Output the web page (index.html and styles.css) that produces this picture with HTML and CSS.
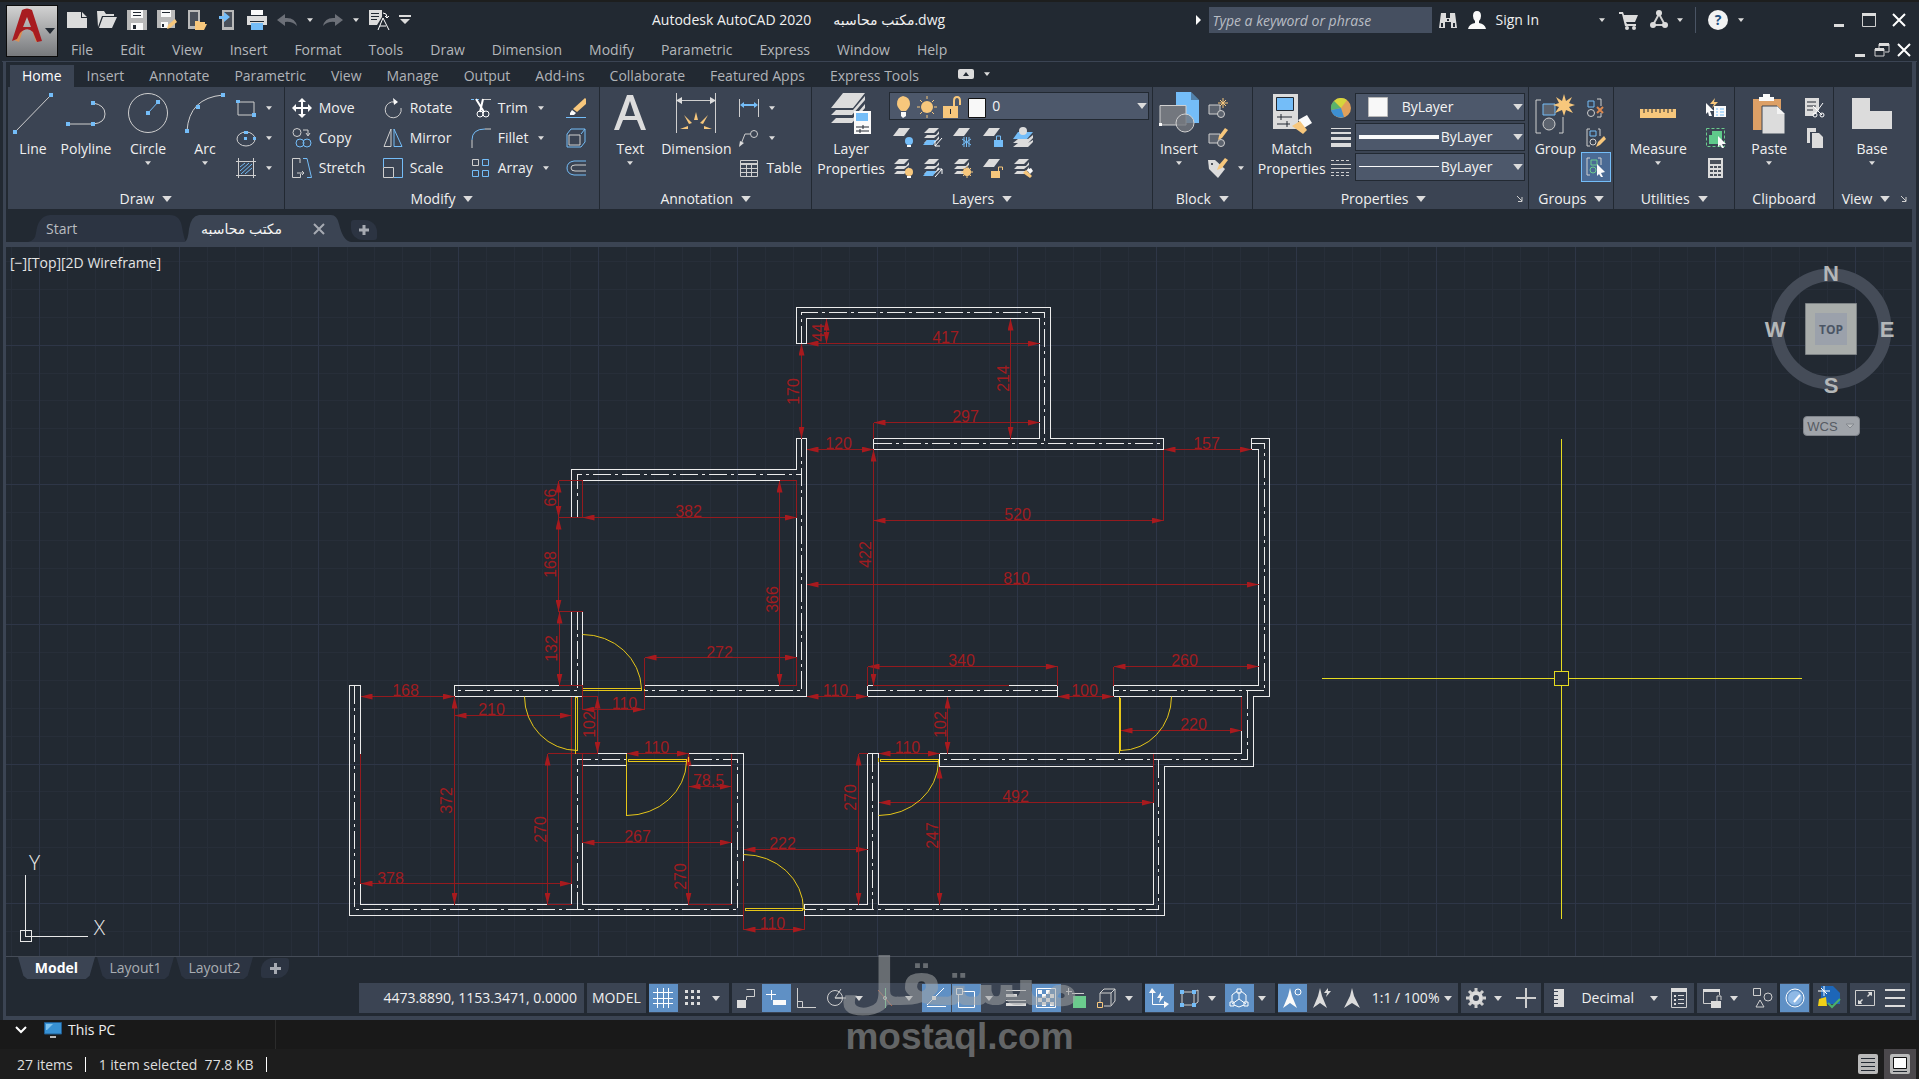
FILE: index.html
```html
<!DOCTYPE html>
<html lang="en">
<head>
<meta charset="utf-8">
<title>Autodesk AutoCAD 2020</title>
<meta name="viewport" content="width=device-width, initial-scale=1">
<link rel="stylesheet" href="styles.css">
</head>
<body>
<svg class="sprite" aria-hidden="true">
  <symbol id="caret" viewBox="0 0 8 5"><path class="fw" d="M0 0H8L4 5Z"/></symbol>
  <symbol id="sheets" viewBox="0 0 20 20"><path class="fw" d="M6 1H16L11 6H1ZM4 8H13L16 4V7L11 11H1ZM4 13H13L16 9V12L11 16H1Z"/></symbol>
  <symbol id="sheet" viewBox="0 0 20 20"><path class="fw" d="M6 1H17L11 9H0Z"/></symbol>
  <symbol id="launch" viewBox="0 0 8 8"><path class="sw" d="M1 1L6 6M6 2V6.500H2"/></symbol>
</svg>

<div class="app">
  <header class="header">
    <button class="app-button" aria-label="Application menu">
      <svg width="50" height="50" viewBox="0 0 50 50"><defs><linearGradient id="metal" x2="0" y2="1"><stop stop-color="#d2d2d2"/><stop offset="1" stop-color="#77797c"/></linearGradient></defs><rect width="50" height="50" fill="url(#metal)"/><path fill="#d98f55" d="M7 34L9 24H16L12 36ZM25 24H31L34 34L29 36Z"/><path fill="#a81c20" d="M5 35L15 4Q20 1 25 4L35 35L30 36L26 26Q20 20 13 27L10 33ZM16 21H24L20 11Z"/><path class="fk" d="M38 22H48L43 28Z"/></svg>
    </button>
    <div class="header-rows">
      <div class="titlebar">
        <div class="quick">
          <button aria-label="New"><svg width="20" height="20" viewBox="0 0 20 20"><path class="fw" d="M0 2H14V8H20V18H0ZM15 2L20 7H15Z"/></svg></button>
          <button aria-label="Open"><svg width="20" height="20" viewBox="0 0 20 20"><path class="fw" d="M0 1H7L9 4H17V6H5L1 17ZM6 7H20L15 18H2Z"/></svg></button>
          <button aria-label="Save"><svg width="20" height="20" viewBox="0 0 20 20"><path class="fg" d="M0 0H20V20H0Z"/><path class="fww" d="M4 0H16V8H4ZM4 13H16V20H4Z"/><path class="fk" d="M6 2H14V3H6ZM6 5H14V6H6ZM6 15H9V19H6Z"/></svg></button>
          <button aria-label="Save as"><svg width="20" height="20" viewBox="0 0 20 20"><path class="fg" d="M0 0H18V18H0Z"/><path class="fww" d="M4 0H14V7H4ZM4 12H11V18H4Z"/><path class="fk" d="M5 2H13V3H5ZM5 14H7V17H5Z"/><path class="fo" d="M10 19L11 15L18 9L20 12L13 18Z"/></svg></button>
          <button aria-label="Open from web"><svg width="20" height="20" viewBox="0 0 20 20"><path class="fg" d="M1 0H13V19H1Z"/><path class="fs" d="M3 2H11V16H3Z"/><path class="fo" d="M8 11H12L13 12H18V14H20L17 20H8Z"/></svg></button>
          <button aria-label="Save to web"><svg width="20" height="20" viewBox="0 0 20 20"><path class="fg" d="M5 0H17V20H5Z"/><path class="fs" d="M7 2H15V17H7Z"/><path class="fb" d="M2 6H7V2L13 7L7 12V9H2Z"/></svg></button>
          <button aria-label="Plot"><svg width="20" height="20" viewBox="0 0 20 20"><path class="fww" d="M4 0H16V5H4Z"/><path class="fw" d="M0 6H20V15H0Z"/><path class="fk" d="M3 11H17V12H3Z"/><path class="fb" d="M4 13H16V20H4Z"/></svg></button>
          <button aria-label="Undo"><svg width="20" height="20" viewBox="0 0 20 20"><path fill="#6c7078" d="M0 10L8 4V8Q18 7 20 16Q15 11 8 12V16Z"/></svg></button>
          <svg class="caret" width="6" height="4"><use href="#caret"/></svg>
          <button aria-label="Redo"><svg width="20" height="20" viewBox="0 0 20 20"><path fill="#6c7078" d="M20 10L12 4V8Q2 7 0 16Q5 11 12 12V16Z"/></svg></button>
          <svg class="caret" width="6" height="4"><use href="#caret"/></svg>
          <button aria-label="Workspace text"><svg width="20" height="20" viewBox="0 0 20 20"><path class="fw" d="M0 0H13V7L8 15H0Z"/><path class="fk" d="M2 3H10V4H2ZM2 6H10V7H2ZM2 9H8V10H2Z"/><path class="sww" d="M9 20L14 8L20 20M11 16H17M14 3Q18 3 18 7M16 6L18 8L20 6"/></svg></button>
          <button aria-label="Customize toolbar"><svg width="12" height="10" viewBox="0 0 12 10"><path class="fw" d="M0 0H12V2H0ZM1 4H11L6 9Z"/></svg></button>
        </div>
        <h1 class="title"><span>Autodesk AutoCAD 2020</span><span>مكتب محاسبه.dwg</span></h1>
        <div class="account">
          <svg class="search-arrow" width="5" height="10" viewBox="0 0 5 10"><path class="fww" d="M0 0L5 5L0 10Z"/></svg>
          <input class="search" type="search" placeholder="Type a keyword or phrase" aria-label="Search">
          <button aria-label="Find"><svg width="20" height="20" viewBox="0 0 20 20"><path class="fw" d="M3 3H8V8H12V3H17L19 18H13V12H7V18H1Z"/><path class="fk" d="M9 9H11V11H9ZM3 13H5V17H3ZM15 13H17V17H15Z"/></svg></button>
          <button class="signin"><svg width="20" height="20" viewBox="0 0 20 20"><path class="fww" d="M10 1Q14 1 14 6Q14 9 12 11V13Q18 14 19 19H1Q2 14 8 13V11Q6 9 6 6Q6 1 10 1Z"/></svg>Sign In</button>
          <svg class="caret" width="6" height="4"><use href="#caret"/></svg>
          <button class="cart" aria-label="App store"><svg width="20" height="20" viewBox="0 0 20 20"><path class="fw" d="M0 2H4L5 5H19L16 12H7L8 14H17V16H6L3 4H0Z"/><circle class="fw" cx="8" cy="18" r="2"/><circle class="fw" cx="15" cy="18" r="2"/></svg></button>
          <button class="hub" aria-label="Stay connected"><svg width="20" height="20" viewBox="0 0 20 20"><path class="sw thick" d="M10 4L4 15H16Z"/><circle class="fw" cx="10" cy="3" r="3"/><circle class="fw" cx="4" cy="15" r="3"/><circle class="fw" cx="16" cy="15" r="3"/></svg></button>
          <svg class="caret" width="6" height="4"><use href="#caret"/></svg>
          <span class="rule"></span>
          <button class="help" aria-label="Help"><span>?</span></button>
          <svg class="caret" width="6" height="4"><use href="#caret"/></svg>
        </div>
        <div class="window-buttons">
          <button aria-label="Minimize"><svg width="14" height="14" viewBox="0 0 14 14"><path class="fw" d="M2 11H12V14H2Z"/></svg></button>
          <button aria-label="Maximize"><svg width="16" height="16" viewBox="0 0 16 16"><path class="sw" d="M1.500 1.500H14.500V14.500H1.500Z"/><path class="fw" d="M1 1H15V4H1Z"/></svg></button>
          <button aria-label="Close"><svg width="14" height="14" viewBox="0 0 14 14"><path class="sww thick" d="M1 1L13 13M13 1L1 13"/></svg></button>
        </div>
      </div>
      <div class="menurow">
        <nav class="menubar" aria-label="Menu bar">
          <a href="#">File</a><a href="#">Edit</a><a href="#">View</a><a href="#">Insert</a><a href="#">Format</a><a href="#">Tools</a><a href="#">Draw</a><a href="#">Dimension</a><a href="#">Modify</a><a href="#">Parametric</a><a href="#">Express</a><a href="#">Window</a><a href="#">Help</a>
        </nav>
        <div class="doc-buttons">
          <button aria-label="Minimize drawing"><svg width="14" height="14" viewBox="0 0 14 14"><path class="fw" d="M2 11H12V14H2Z"/></svg></button>
          <button aria-label="Restore drawing"><svg width="16" height="14" viewBox="0 0 16 14"><path class="sw" d="M1 6H10V13H1ZM5 5V1H15V9H11"/><path class="fw" d="M1 5H10V8H1ZM5 0H15V3H5Z"/></svg></button>
          <button aria-label="Close drawing"><svg width="14" height="14" viewBox="0 0 14 14"><path class="sww thick" d="M1 1L13 13M13 1L1 13"/></svg></button>
        </div>
      </div>
    </div>
  </header>

  <div class="frame">
    <nav class="ribbon-tabs" aria-label="Ribbon tabs">
      <a class="active" href="#">Home</a><a href="#">Insert</a><a href="#">Annotate</a><a href="#">Parametric</a><a href="#">View</a><a href="#">Manage</a><a href="#">Output</a><a href="#">Add-ins</a><a href="#">Collaborate</a><a href="#">Featured Apps</a><a href="#">Express Tools</a>
      <button class="collapse" aria-label="Minimize ribbon"><svg width="16" height="10" viewBox="0 0 16 10"><rect class="fw" width="16" height="10" rx="2"/><path class="fk" d="M5 7H11L8 3Z"/></svg></button>
      <svg class="caret" width="6" height="4"><use href="#caret"/></svg>
    </nav>

    <div class="ribbon">
      <section class="panel p-draw">
        <div class="tools">
          <button class="big line"><svg width="40" height="42" viewBox="0 0 40 42"><path class="sw" d="M2 40L38 3"/><path class="fb" d="M0 38H4V42H0ZM36 1H40V5H36Z"/></svg>Line</button>
          <button class="big polyline"><svg width="40" height="42" viewBox="0 0 40 42"><path class="sw" d="M2 32H27Q39 31 39 22T27 11"/><path class="fb" d="M0 30H4V34H0ZM25 30H29V34H25ZM25 9H29V13H25Z"/></svg>Polyline</button>
          <button class="big circle"><svg width="40" height="42" viewBox="0 0 40 42"><circle class="sw" cx="20" cy="21" r="19.500"/><path class="sb" d="M20 21L31 9"/><path class="fb" d="M18 19H22V23H18ZM28 8H32V12H28Z"/></svg>Circle<svg class="caret" width="6" height="4"><use href="#caret"/></svg></button>
          <button class="big arc"><svg width="40" height="42" viewBox="0 0 40 42"><path class="sw" d="M2 39Q4 6 38 3"/><path class="fb" d="M0 37H4V41H0ZM11 13H15V17H11ZM36 1H40V5H36Z"/></svg>Arc<svg class="caret" width="6" height="4"><use href="#caret"/></svg></button>
          <div class="col">
            <button class="small"><svg width="20" height="20" viewBox="0 0 20 20"><path class="sw" d="M2 4H18V17H2Z"/><path class="fb" d="M0 2H4V5H0ZM16 15H20V19H16Z"/></svg><svg class="caret" width="6" height="4"><use href="#caret"/></svg></button>
            <button class="small"><svg width="20" height="20" viewBox="0 0 20 20"><ellipse class="sw" cx="10" cy="11" rx="9" ry="7"/><path class="fb" d="M8 3H12V6H8ZM8 9H11V12H8ZM17 9H20V12H17Z"/></svg><svg class="caret" width="6" height="4"><use href="#caret"/></svg></button>
            <button class="small"><svg width="20" height="20" viewBox="0 0 20 20"><path class="sw" d="M0 3.500H20M0 17.500H20M2.500 0V20M17.500 0V20"/><path class="sb" d="M4 9L9 5M4 13L13 5M5 16L16 6M9 16L16 10"/></svg><svg class="caret" width="6" height="4"><use href="#caret"/></svg></button>
          </div>
        </div>
        <h2>Draw<svg class="caret" width="10" height="6"><use href="#caret"/></svg></h2>
      </section>

      <section class="panel p-modify">
        <div class="tools">
          <div class="col c1">
            <button class="small"><svg width="20" height="20" viewBox="0 0 20 20"><path class="sww thick" d="M10 2V18M2 10H18"/><path class="fww" d="M6 4H14L10 0ZM6 16H14L10 20ZM4 6V14L0 10ZM16 6V14L20 10Z"/></svg>Move</button>
            <button class="small"><svg width="20" height="20" viewBox="0 0 20 20"><circle class="sw" cx="5" cy="4.500" r="4"/><circle class="sb" cx="8" cy="15" r="4"/><circle class="sb" cx="15" cy="15" r="4"/><path class="sw" d="M11 2H16V7M14 5L16 8L18 5"/></svg>Copy</button>
            <button class="small"><svg width="20" height="20" viewBox="0 0 20 20"><path class="sw" d="M8 5V.5H.5V19.500H8.500V16M5 15H12M10 13L12 15L10 17"/><path class="sb" d="M11 .5H15L19.500 19.500H15"/></svg>Stretch</button>
          </div>
          <div class="col c2">
            <button class="small"><svg width="20" height="20" viewBox="0 0 20 20"><path class="sw" d="M12 4A8 8 0 1 0 18 10"/><path class="fww" d="M10 0L15 4L11 7Z"/></svg>Rotate</button>
            <button class="small"><svg width="20" height="20" viewBox="0 0 20 20"><path class="sw" d="M8 1V18.500H1Z"/><path class="sb" d="M11 1V18.500H19Z"/></svg>Mirror</button>
            <button class="small"><svg width="20" height="20" viewBox="0 0 20 20"><path class="sb" d="M.5 9V.5H19.500V19.500H11"/><path class="sw" d="M.5 9.500H10.500V19.500H.5Z"/></svg>Scale</button>
          </div>
          <div class="col c3">
            <button class="small"><svg width="20" height="20" viewBox="0 0 20 20"><path class="sb dash" d="M0 1.500H8"/><path class="sw" d="M12 1.500H20"/><path class="sww thick" d="M5 1L13 14M12 1L9 14"/><circle class="sww" cx="9" cy="16" r="3"/><circle class="sww" cx="15" cy="16" r="3"/></svg>Trim<svg class="caret" width="6" height="4"><use href="#caret"/></svg></button>
            <button class="small"><svg width="20" height="20" viewBox="0 0 20 20"><path class="sb" d="M1 12Q1 1 14 1"/><path class="sw" d="M14 1H20M1 12V20"/></svg>Fillet<svg class="caret" width="6" height="4"><use href="#caret"/></svg></button>
            <button class="small"><svg width="20" height="20" viewBox="0 0 20 20"><path class="sw" d="M1.500 1.500H7.500V7.500H1.500Z"/><path class="sb" d="M11.500 1.500H17.500V7.500H11.500ZM1.500 12.500H7.500V18.500H1.500ZM11.500 12.500H17.500V18.500H11.500Z"/></svg>Array<svg class="caret" width="6" height="4"><use href="#caret"/></svg></button>
          </div>
          <div class="col c4">
            <button class="small" aria-label="Erase"><svg width="20" height="20" viewBox="0 0 20 20"><path class="fo" d="M19 0L20 1V6L11 14L7 11Z"/><path class="fww" d="M6 12L10 15L8 17H4V15Z"/><path class="sb" d="M0 19.500H20"/></svg></button>
            <button class="small" aria-label="Explode"><svg width="20" height="20" viewBox="0 0 20 20"><path class="sb" d="M1 6L5 1H19V14L15 19M1 6V19M15 6L19 1M15 19H1"/><path class="sw" d="M3 7H14V17H3Z"/></svg></button>
            <button class="small" aria-label="Offset"><svg width="20" height="20" viewBox="0 0 20 20"><path class="sb" d="M20 3H8Q1 4 1 10T8 17H20"/><path class="sw" d="M20 7H9Q5 7 5 10T9 13H20"/></svg></button>
          </div>
        </div>
        <h2>Modify<svg class="caret" width="10" height="6"><use href="#caret"/></svg></h2>
      </section>

      <section class="panel p-annotation">
        <div class="tools">
          <button class="big text"><svg width="40" height="42" viewBox="0 0 40 42"><path class="fw" d="M4 38L17 3H23L36 38H31L27 28H13L9 38ZM15 24H25L20 9Z"/></svg>Text<svg class="caret" width="6" height="4"><use href="#caret"/></svg></button>
          <button class="big dimension"><svg width="40" height="42" viewBox="0 0 40 42"><path class="sw" d="M.5 1V41M39.500 1V41M2 8.500H38"/><path class="fw" d="M0 8.500L6 5V12ZM40 8.500L34 5V12Z"/><path class="fo" d="M18 28L20 20L22 28ZM8 23L16 31L13 32ZM32 23L24 31L27 32ZM4 37L12 34V37ZM36 37L28 34V37Z"/></svg>Dimension</button>
          <div class="col">
            <button class="small"><svg width="20" height="20" viewBox="0 0 20 20"><path class="sw" d="M.5 1V19M19.500 1V19"/><path class="sb thick" d="M3 7H17"/><path class="fb" d="M1 7L5 4V10ZM19 7L15 4V10Z"/></svg><svg class="caret" width="6" height="4"><use href="#caret"/></svg></button>
            <button class="small"><svg width="20" height="20" viewBox="0 0 20 20"><circle class="sw" cx="15" cy="6" r="3.500"/><path class="sw" d="M2 16L6 6H11"/><path class="fw" d="M0 19L1 13L5 15Z"/></svg><svg class="caret" width="6" height="4"><use href="#caret"/></svg></button>
            <button class="small"><svg width="20" height="20" viewBox="0 0 20 20"><path class="sw" d="M1.500 2.500H18.500V18.500H1.500ZM1.500 10.500H18.500M1.500 14.500H18.500M7.500 6V18M12.500 6V18"/><path class="sw thick" d="M1 6H19"/></svg>Table</button>
          </div>
        </div>
        <h2>Annotation<svg class="caret" width="10" height="6"><use href="#caret"/></svg></h2>
      </section>

      <section class="panel p-layers">
        <div class="tools">
          <button class="big wider"><svg width="40" height="42" viewBox="0 0 40 42"><path class="fw" d="M12 1H34L22 16H0ZM5 18H22L34 4V8L21 23H0ZM5 26H22L34 12V16L21 31H0Z"/><path class="fww" d="M23 19H40V42H23Z"/><path class="fb" d="M25 21H37V29H25Z"/><path class="skt" d="M25 35H38M25 39H38M32 33V37M29 37V41"/></svg>Layer<span>Properties</span></button>
          <div class="layer-area">
            <div class="combo layer-combo">
              <select aria-label="Layer"><option>0</option></select>
              <svg class="combo-art" width="96" height="22" viewBox="0 0 96 22"><path class="fo" d="M10 0Q17 1 17 8Q17 11 13 15H8Q4 11 4 8Q4 1 10 0Z"/><path class="fww" d="M8 16H13V20L10 22L8 20Z"/><circle class="fo" cx="34" cy="11" r="6"/><path class="so" d="M34 0V3M34 19V22M24 11H27M41 11H44M27 4L29 6M39 16L41 18M41 4L39 6M29 16L27 18"/><path class="fo" d="M50 10H65V22H50Z"/><path class="so thick" d="M61 10V5Q61 1 64 1T67 5V9"/><path fill="#f8f8f8" stroke="#111" d="M75.500 2.500H92.500V21.500H75.500Z"/><path class="fk" d="M57 13H58V18H57Z"/></svg>
              <svg class="combo-arrow" width="10" height="6"><use href="#caret"/></svg>
            </div>
            <div class="icon-grid">
              <button aria-label="Off"><svg width="20" height="20"><use href="#sheet"/><circle class="fb" cx="16" cy="14" r="4"/><path class="fww" d="M14 18H18V20H14Z"/></svg></button>
              <button aria-label="Isolate"><svg width="20" height="20"><use href="#sheets"/><path class="fb" d="M4 13H13L10 18H0Z"/><path class="sww" d="M19 11L12 19M12 14V19H17"/></svg></button>
              <button aria-label="Freeze"><svg width="20" height="20"><use href="#sheet"/><path class="sb" d="M13.500 10V20M9 12L18 18M18 12L9 18M11 10V20M16 10V20"/></svg></button>
              <button aria-label="Lock"><svg width="20" height="20"><use href="#sheet"/><path class="fb" d="M11 13H20V20H11Z"/><path class="sb" d="M13.500 13V9H17.500V13"/></svg></button>
              <button aria-label="Make current"><svg width="20" height="20"><path class="fw" d="M5 12H15L20 8V11L15 16H0ZM5 16H15L20 13V15L15 20H0Z"/><path class="fb" d="M5 5H20L14 12H0Z"/><circle class="fw" cx="10" cy="4" r="4"/></svg></button>
              <button aria-label="Turn all on"><svg width="20" height="20"><use href="#sheets"/><circle class="fo" cx="16" cy="14" r="4"/><path class="fww" d="M14 18H18V20H14Z"/></svg></button>
              <button aria-label="Unisolate"><svg width="20" height="20"><use href="#sheets"/><path class="fb" d="M4 13H13L10 18H0Z"/><path class="sww" d="M12 19L19 11M14 11H19V16"/></svg></button>
              <button aria-label="Thaw all"><svg width="20" height="20"><use href="#sheets"/><circle class="fo" cx="14" cy="14" r="4"/><path class="so" d="M14 8V20M8 14H20M10 10L18 18M18 10L10 18"/></svg></button>
              <button aria-label="Unlock"><svg width="20" height="20"><use href="#sheet"/><path class="fo" d="M8 13H17V20H8Z"/><path class="so" d="M15.500 13V9H19.500V12"/></svg></button>
              <button aria-label="Match layer"><svg width="20" height="20"><use href="#sheets"/><path class="fo" d="M10 15L13 12L19 18L17 20Z"/><path class="fww" d="M14 12L18 10L20 13L17 16Z"/></svg></button>
            </div>
          </div>
        </div>
        <h2>Layers<svg class="caret" width="10" height="6"><use href="#caret"/></svg></h2>
      </section>

      <section class="panel p-block">
        <div class="tools">
          <button class="big"><svg width="40" height="42" viewBox="0 0 40 42"><path class="fb" d="M17 0H32L40 8V31H17Z"/><path class="fk" fill-opacity=".4" d="M32 0L40 8H32Z"/><path fill="#73777e" stroke="#d0d0d0" d="M1 13.500H27V33H1Z"/><circle fill="#73777e" fill-opacity=".8" stroke="#d0d0d0" cx="26" cy="31" r="9"/><path class="fww" d="M0 31H3V34H0Z"/></svg>Insert<svg class="caret" width="6" height="4"><use href="#caret"/></svg></button>
          <div class="col">
            <button class="small" aria-label="Create block"><svg width="20" height="20"><path class="sw fm" d="M1 7H12V16H1Z"/><circle class="sw fm" cx="13" cy="16" r="3.500"/><path class="so" d="M15 0V10M10 5H20M12 2L18 8M18 2L12 8"/></svg></button>
            <button class="small" aria-label="Edit block"><svg width="20" height="20"><path class="sw fm" d="M1 6H12V15H1Z"/><circle class="sw fm" cx="13" cy="15" r="3.500"/><path class="fo" d="M10 12L11 8L17 0L20 2L14 10Z"/></svg></button>
            <button class="small"><svg width="20" height="20"><path class="fw" d="M0 2H7L17 11L10 20L1 11Z"/><path class="fo" d="M9 12L11 7L17 0L20 2L14 10Z"/><circle class="fk" cx="4" cy="6" r="1"/></svg><svg class="caret" width="6" height="4"><use href="#caret"/></svg></button>
          </div>
        </div>
        <h2>Block<svg class="caret" width="10" height="6"><use href="#caret"/></svg></h2>
      </section>

      <section class="panel p-properties">
        <div class="tools">
          <button class="big wider"><svg width="40" height="42" viewBox="0 0 40 42"><path class="fw" d="M1 2H26V37H1Z"/><path class="fb" stroke="#222932" d="M4.500 5.500H21.500V18.500H4.500Z"/><path class="skt" d="M5 25H20M9 22V28M5 32H18M15 29V35"/><path class="fww" d="M26 28L35 23L40 31L32 36Z"/><path class="fo" d="M20 34L28 29L35 38L31 42Z"/></svg>Match<span>Properties</span></button>
          <div class="col">
            <button class="small" aria-label="Color"><svg width="20" height="20"><circle fill="#e0a05a" cx="10" cy="10" r="10"/><path fill="#d6d63c" d="M10 10L3 3A10 10 0 0 1 16 2Z"/><path fill="#59b36b" d="M10 10L0 12A10 10 0 0 1 3 3Z"/><path fill="#3d8fd1" d="M10 10L0 12A10 10 0 0 0 13 19Z"/></svg></button>
            <button class="small" aria-label="Lineweight"><svg width="20" height="20"><path class="fw" d="M0 0H20V1H0ZM0 4H20V6H0ZM0 9H20V12H0ZM0 15H20V19H0Z"/></svg></button>
            <button class="small" aria-label="Linetype"><svg width="20" height="20"><path class="sw" d="M0 6.500H20M0 10.500H20"/><path class="sw dash" d="M0 2.500H20M0 14.500H20M0 17.500H20"/></svg></button>
          </div>
          <div class="combos">
            <div class="combo"><select class="c-color" aria-label="Object color"><option>ByLayer</option></select><svg class="combo-art" width="30" height="20"><path fill="#f8f8f8" stroke="#b8b8b8" d="M9.500 .5H28.500V19.500H9.500Z"/></svg><svg class="combo-arrow" width="10" height="6"><use href="#caret"/></svg></div>
            <div class="combo"><select class="c-line" aria-label="Object lineweight"><option>ByLayer</option></select><svg class="combo-art" width="80" height="20"><path class="fww" d="M0 8H80V12H0Z"/></svg><svg class="combo-arrow" width="10" height="6"><use href="#caret"/></svg></div>
            <div class="combo"><select class="c-line" aria-label="Object linetype"><option>ByLayer</option></select><svg class="combo-art" width="80" height="20"><path class="fww" d="M0 9H80V10H0Z"/></svg><svg class="combo-arrow" width="10" height="6"><use href="#caret"/></svg></div>
          </div>
        </div>
        <h2>Properties<svg class="caret" width="10" height="6"><use href="#caret"/></svg><svg class="launch" width="8" height="8"><use href="#launch"/></svg></h2>
      </section>

      <section class="panel p-groups">
        <div class="tools">
          <button class="big"><svg width="40" height="42" viewBox="0 0 40 42"><path class="sw" d="M6 8H1V41H6M24 41H28V25"/><path class="sb fm" d="M8 12H20V23H8Z"/><circle class="sw fm" cx="14" cy="32" r="6"/><path class="fo" d="M29 2L31 9L37 5L34 11L40 13L34 15L38 21L31 18L29 24L27 18L20 21L24 15L18 13L24 11L21 5L27 9Z"/></svg>Group</button>
          <div class="col">
            <button class="small" aria-label="Ungroup"><svg width="20" height="20"><path class="sb" d="M2 3H8V9H2Z"/><circle class="sw" cx="5" cy="15" r="3.500"/><path class="sw" d="M11 1H15V8M15 15V19H11"/><path stroke="#d98850" stroke-width="2" d="M11 9L17 15M17 9L11 15"/></svg></button>
            <button class="small" aria-label="Edit group"><svg width="20" height="20"><path class="sw" d="M4 1H1V18H4M12 1H14V8"/><path class="sb" d="M4 3H10V8H4Z"/><circle class="sw" cx="7" cy="14" r="3"/><path class="fo" d="M10 19L12 14L18 8L20 11L14 17Z"/></svg></button>
            <button class="small on" aria-label="Group selection" aria-pressed="true"><svg width="20" height="20"><path class="sw" d="M4 1H1V18H4M12 1H15V8"/><path class="sgr" d="M5 3H11V8H5Z"/><circle class="sgr" cx="7" cy="13" r="3"/><path class="fww" d="M11 7L19 15L15 16L17 20L15 20L13 17L11 19Z"/></svg></button>
          </div>
        </div>
        <h2>Groups<svg class="caret" width="10" height="6"><use href="#caret"/></svg></h2>
      </section>

      <section class="panel p-utilities">
        <div class="tools">
          <button class="big wider"><svg width="40" height="42" viewBox="0 0 40 42"><path class="fo" d="M2 17H38V26H2Z"/><path class="skt" d="M6 17V21M10 17V20M14 17V21M18 17V20M22 17V21M26 17V20M30 17V21M34 17V20"/></svg>Measure<svg class="caret" width="6" height="4"><use href="#caret"/></svg></button>
          <div class="col">
            <button class="small" aria-label="Quick select"><svg width="20" height="20"><path class="fww" d="M8 8H20V19H8ZM0 5L8 13H4L6 18H3L2 14L0 16Z"/><path class="fo" d="M9 0L4 6H8L6 10L12 4H8Z"/><path class="sb" d="M10 11H12M14 11H18M10 14H12M14 14H18M10 17H12M14 17H18"/></svg></button>
            <button class="small" aria-label="Select all"><svg width="20" height="20"><path fill="#5fc98b" d="M6 3H16V13H13V16H3V7H6Z"/><path class="sgr dash" d="M.5 .5H18.500V18.500H.5Z"/><path class="fww" d="M12 8L20 16L16 16L18 20H16L14 17L12 19Z"/></svg></button>
            <button class="small" aria-label="Calculator"><svg width="20" height="20"><path class="fw" d="M2 0H17V20H2Z"/><path class="fs" d="M4 2H15V6H4ZM4 8H7V10H4ZM8 8H11V10H8ZM12 8H15V10H12ZM4 12H7V14H4ZM8 12H11V14H8ZM12 12H15V14H12ZM4 16H7V18H4ZM8 16H11V18H8ZM12 16H15V18H12Z"/></svg></button>
          </div>
        </div>
        <h2>Utilities<svg class="caret" width="10" height="6"><use href="#caret"/></svg></h2>
      </section>

      <section class="panel p-clipboard">
        <div class="tools">
          <button class="big"><svg width="40" height="42" viewBox="0 0 40 42"><path fill="#dda066" d="M4 7H32V38H4Z"/><path class="fww" d="M10 5H14V2H21V5H25V9H10Z"/><path class="fw" stroke="#3b4453" d="M13 14H28L36 22V42H13Z"/><path fill="#f4f4f4" d="M28 14L36 22H28Z"/></svg>Paste<svg class="caret" width="6" height="4"><use href="#caret"/></svg></button>
          <div class="col">
            <button class="small" aria-label="Cut"><svg width="20" height="20"><path class="fw" d="M0 0H14V12L8 18H0Z"/><path class="skt" d="M2 4H11M2 8H11M2 12H8"/><path class="sww" d="M18 5L10 16M8 8L17 17"/><circle class="sww" cx="10" cy="17" r="2"/><circle class="sww" cx="17" cy="17" r="2"/></svg></button>
            <button class="small" aria-label="Copy clip"><svg width="20" height="20"><path class="fw" d="M2 0H11V4H5V15H2ZM7 5H14L18 9V20H7Z"/></svg></button>
          </div>
        </div>
        <h2>Clipboard</h2>
      </section>

      <section class="panel p-view">
        <div class="tools">
          <button class="big wider"><svg width="40" height="42" viewBox="0 0 40 42"><path class="fw" d="M0 6H18V19H40V37H0Z"/></svg>Base<svg class="caret" width="6" height="4"><use href="#caret"/></svg></button>
        </div>
        <h2>View<svg class="caret" width="10" height="6"><use href="#caret"/></svg><svg class="launch" width="8" height="8"><use href="#launch"/></svg></h2>
      </section>
    </div>

    <nav class="file-tabs" aria-label="Drawings">
      <a class="file-tab start" href="#"><svg viewBox="0 0 158 27" preserveAspectRatio="none"><path fill="#2c3442" d="M0 27Q7 26 8 18Q10 1 22 0H142Q152 0 154 12T158 27Z"/></svg><span>Start</span></a>
      <div class="file-tab current"><svg viewBox="0 0 166 27" preserveAspectRatio="none"><path fill="#3b4453" d="M0 27Q3 25 4 14Q6 1 14 0H146Q152 0 154 9Q158 26 166 27Z"/></svg><a href="#">مكتب محاسبه</a><button aria-label="Close drawing tab"><svg width="12" height="12" viewBox="0 0 12 12"><path stroke="#a6aab2" stroke-width="2" d="M1 1L11 11M11 1L1 11"/></svg></button></div>
      <button class="add-file" aria-label="New tab"><svg width="12" height="12" viewBox="0 0 12 12"><path stroke="#a6aab2" stroke-width="3" d="M6 1V11M1 6H11"/></svg></button>
    </nav>

    <main class="canvas">
      <svg class="drawing" role="img" aria-label="Floor plan">
        <defs>
          <marker id="arrow" markerUnits="userSpaceOnUse" markerWidth="12" markerHeight="6" refX="12" refY="3" orient="auto-start-reverse"><path fill="#a81a1e" d="M0 0V6L12 3Z"/></marker>
        </defs>
        <g class="world">
          <path class="grid-minor" d="M11 0V2000M67 0V2000M95 0V2000M123 0V2000M151 0V2000M207 0V2000M235 0V2000M263 0V2000M291 0V2000M347 0V2000M374 0V2000M402 0V2000M430 0V2000M486 0V2000M514 0V2000M542 0V2000M570 0V2000M626 0V2000M654 0V2000M682 0V2000M710 0V2000M765 0V2000M793 0V2000M821 0V2000M849 0V2000M905 0V2000M933 0V2000M961 0V2000M989 0V2000M1045 0V2000M1073 0V2000M1100 0V2000M1128 0V2000M1184 0V2000M1212 0V2000M1240 0V2000M1268 0V2000M1324 0V2000M1352 0V2000M1380 0V2000M1408 0V2000M1464 0V2000M1492 0V2000M1520 0V2000M1548 0V2000M1603 0V2000M1631 0V2000M1659 0V2000M1687 0V2000M1743 0V2000M1771 0V2000M1799 0V2000M1827 0V2000M1883 0V2000M1911 0V2000M0 261H3000M0 289H3000M0 317H3000M0 373H3000M0 400H3000M0 428H3000M0 456H3000M0 512H3000M0 540H3000M0 568H3000M0 596H3000M0 652H3000M0 680H3000M0 708H3000M0 736H3000M0 791H3000M0 819H3000M0 847H3000M0 875H3000M0 931H3000"/>
          <path class="grid-major" d="M39 0V2000M179 0V2000M318 0V2000M458 0V2000M598 0V2000M737 0V2000M877 0V2000M1017 0V2000M1156 0V2000M1296 0V2000M1436 0V2000M1575 0V2000M1715 0V2000M1855 0V2000M0 345H3000M0 484H3000M0 624H3000M0 764H3000M0 903H3000"/>

          <g class="walls">
            <path d="M806 343H796V307H1050V438H1163V449H873V438H1039V318H806V343"/>
            <path d="M1251 449V438H1269V696H1253V766H1164V915H804V904H867V753H878V904H1153V766H939V753H1241V696H1113V685H1258V449H1251"/>
            <path d="M867 685H1057V696H867Z"/>
            <path d="M571 517V469H796V438H806V696H644V685H796V480H582V517"/>
            <path d="M571 611V685H454V696H582V611"/>
            <path d="M360 904V685H349V915H743V753H688V765H731V904H582V765H626V753H571V904H360"/>
          </g>
          <g class="centres">
            <path d="M801 343V312H1044V443"/><path d="M873 443H1163"/><path d="M1251 443H1264V690H1113"/><path d="M1247 690V759H939"/><path d="M1158 759V909H804"/><path d="M872 753V909"/><path d="M867 690H1057"/><path d="M577 517V474H801"/><path d="M801 438V690H644"/><path d="M577 611V690H454"/><path d="M354 685V909H737V759H688"/><path d="M577 909V759H626"/>
          </g>
          <g class="red">
            <path d="M1163 449V520M867 666V685M1057 666V685M1113 666V685M743 860V929M804 915V929M644 657V709M582 480V517M582 685V709M796 480V517M796 657V685M873 422V438M558 480H582M558 517H582M558 611H582M559 685H582M779 480H796M779 685H796M547 753H597M547 904H571M582 696H597M688 904H731M858 753H867M731 753V842M582 753V842M571 696V883M360 753V883M1153 753V802M873 685H1008M1241 696V730"/>
            <g class="dims">
              <path d="M806 343H1039"/><path d="M873 422H1039"/><path d="M806 449H873"/><path d="M1163 449H1251"/><path d="M873 520H1163"/><path d="M806 584H1258"/><path d="M867 666H1057"/><path d="M1113 666H1258"/><path d="M806 696H867"/><path d="M1057 696H1113"/><path d="M1120 730H1241"/><path d="M878 802H1153"/><path d="M878 753H939"/><path d="M743 849H867"/><path d="M743 929H804"/><path d="M582 842H731"/><path d="M688 786H731"/><path d="M626 753H688"/><path d="M582 709H644"/><path d="M454 715H571"/><path d="M360 696H454"/><path d="M360 883H571"/><path d="M582 517H796"/><path d="M644 657H796"/>
              <path d="M826 318V343"/><path d="M801 343V438"/><path d="M1010 318V438"/><path d="M873 449V685"/><path d="M558 480V517"/><path d="M558 517V611"/><path d="M559 611V685"/><path d="M779 480V685"/><path d="M454 696V904"/><path d="M547 753V904"/><path d="M597 696V753"/><path d="M688 753V904"/><path d="M947 696V753"/><path d="M858 753V904"/><path d="M939 766V904"/>
            </g>
            <g class="labels">
              <text x="945" y="342">417</text><text x="965" y="421">297</text><text x="838" y="448">120</text><text x="1206" y="448">157</text><text x="1017" y="519">520</text><text x="1016" y="583">810</text><text x="961" y="665">340</text><text x="1184" y="665">260</text><text x="835" y="695">110</text><text x="1084" y="695">100</text><text x="1193" y="729">220</text><text x="1015" y="801">492</text><text x="907" y="752">110</text><text x="782" y="848">222</text><text x="772" y="928">110</text><text x="637" y="841">267</text><text x="708" y="785">78,5</text><text x="656" y="752">110</text><text x="624" y="708">110</text><text x="491" y="714">210</text><text x="405" y="695">168</text><text x="390" y="883">378</text><text x="688" y="516">382</text><text x="719" y="657">272</text>
              <text transform="translate(823 332) rotate(-90)">44</text><text transform="translate(798 391) rotate(-90)">170</text><text transform="translate(1008 378) rotate(-90)">214</text><text transform="translate(870 554) rotate(-90)">422</text><text transform="translate(555 497) rotate(-90)">66</text><text transform="translate(555 564) rotate(-90)">168</text><text transform="translate(556 648) rotate(-90)">132</text><text transform="translate(777 599) rotate(-90)">366</text><text transform="translate(451 800) rotate(-90)">372</text><text transform="translate(545 829) rotate(-90)">270</text><text transform="translate(594 724) rotate(-90)">102</text><text transform="translate(685 876) rotate(-90)">270</text><text transform="translate(945 724) rotate(-90)">102</text><text transform="translate(855 797) rotate(-90)">270</text><text transform="translate(937 835) rotate(-90)">247</text>
            </g>
          </g>
          <g class="doors">
            <path class="leaf" d="M582 688H641V690H582M575 697V750H577V697ZM575 750V753M628 759H686V761H628ZM626 753V815M745 908H802V910H745ZM880 759H938V761H880ZM1119 696V753M1120 697V750M644 688V690M688 756V761M878 757V761M804 908V910"/>
            <path d="M582 634A59 56 0 0 1 641 688M524 696A53 54 0 0 0 577 750M686 761A60 55 0 0 1 626 815M743 854A60 55 0 0 1 803 909M938 761A60 55 0 0 1 878 815M1171 696A51 54 0 0 1 1120 750"/>
          </g>
          <path class="crosshair" d="M1561 438V671M1561 685V918M1321 678H1554M1568 678H1801M1554 671H1568V685H1554Z"/>
          <g class="ucs">
            <path d="M25 874V936H87M20 930H31V941H20Z"/>
            <text x="34" y="869">Y</text><text x="99" y="934">X</text>
          </g>
        </g>
      </svg>
      <p class="view-label">[−][Top][2D Wireframe]</p>
      <div class="viewcube">
        <svg width="136" height="136" viewBox="-68 -68 136 136"><circle fill="none" stroke="#454c58" stroke-width="13" r="54"/><path fill="#a9adab" stroke="#7d8285" d="M-25.500 -25.500H25.500V25.500H-25.500Z"/><path fill="#9ba1ab" d="M-16 -16H16V16H-16Z"/><g class="compass"><text y="-48">N</text><text y="64">S</text><text x="-56" y="8">W</text><text x="56" y="8">E</text></g><text class="cube-face" y="5">TOP</text></svg>
        <button class="wcs">WCS<svg width="10" height="6" viewBox="0 0 10 6"><path fill="#b9bcbf" stroke="#85898f" d="M1 1H9L5 5Z"/></svg></button>
      </div>
    </main>

    <nav class="layout-tabs" aria-label="Layouts">
      <a class="layout-tab current" href="#">Model</a><a class="layout-tab" href="#">Layout1</a><a class="layout-tab" href="#">Layout2</a><button class="add-layout" aria-label="New layout"><svg width="11" height="11" viewBox="0 0 11 11"><path stroke="#a6aab2" stroke-width="3" d="M5.500 0V11M0 5.500H11"/></svg></button>
    </nav>

    <div class="statusbar">
      <div class="sb-group coords">4473.8890, 1153.3471, 0.0000</div>
      <div class="sb-group"><button class="sb-text model">MODEL</button></div>
      <div class="sb-group">
        <button class="sb on" aria-label="Grid"><svg width="20" height="20"><path class="sww" d="M4.500 0V20M10.500 0V20M15.500 0V20M0 4.500H20M0 10.500H20M0 15.500H20"/></svg></button>
        <button class="sb" aria-label="Snap"><svg width="20" height="20"><path class="fw" d="M2 2H5V5H2ZM8 2H11V5H8ZM14 2H17V5H14ZM2 8H5V11H2ZM8 8H11V11H8ZM14 8H17V11H14ZM2 14H5V17H2ZM8 14H11V17H8ZM14 14H17V17H14Z"/></svg></button>
        <svg class="sb-caret" width="8" height="5"><use href="#caret"/></svg>
      </div>
      <div class="sb-group">
        <button class="sb" aria-label="Infer constraints"><svg width="20" height="20"><path class="fw" d="M1 12H10V20H1Z"/><path class="sw" d="M10.500 1.500H18.500V8.500H10.500V12"/></svg></button>
        <button class="sb on" aria-label="Dynamic input"><svg width="20" height="20"><path class="sww" d="M5.500 2V12M0 6.500H10"/><path class="fww" d="M7 12H20V17H7Z"/></svg></button>
        <button class="sb" aria-label="Ortho"><svg width="20" height="20"><path class="sw" d="M1.500 0V19.500H20M1.500 13.500H6.500V19"/></svg></button>
        <button class="sb" aria-label="Polar tracking"><svg width="20" height="20"><circle class="sw" cx="9" cy="10" r="7.500"/><path class="sw" d="M15 1L9 10H20M9 10H16"/></svg></button>
        <svg class="sb-caret" width="8" height="5"><use href="#caret"/></svg>
        <button class="sb" aria-label="Isodraft"><svg width="20" height="20"><path stroke="#b0654b" d="M2 2L16 18"/><path class="sgr" d="M9.500 0V20"/><circle class="sw" cx="9" cy="10" r="1.500"/></svg></button>
        <svg class="sb-caret" width="8" height="5"><use href="#caret"/></svg>
        <button class="sb on" aria-label="Object snap tracking"><svg width="20" height="20"><path class="sww" d="M18 0L1 17M1 18.500H20"/><path class="fww" d="M6 8H10V12H6Z"/></svg></button>
        <button class="sb on" aria-label="Object snap"><svg width="20" height="20"><path class="sww" d="M7 3.500H18.500V19.500H2.500V7M.5 .5H6.500V6.500H.5Z"/></svg></button>
        <svg class="sb-caret" width="8" height="5"><use href="#caret"/></svg>
        <button class="sb" aria-label="Lineweight display"><svg width="20" height="20"><path class="fw" d="M0 2H20V3H0ZM0 6H11V9H0ZM0 12H20V13H0ZM0 15H20V18H0Z"/></svg></button>
        <button class="sb on" aria-label="Transparency"><svg width="20" height="20"><path class="sww" d="M.5 .5H19.500V19.500H.5Z"/><path class="fww" d="M2 2H6V6H2ZM10 2H14V6H10ZM6 6H10V10H6ZM14 6H18V10H14ZM2 10H6V14H2ZM10 10H14V14H10ZM6 14H10V18H6ZM14 14H18V18H14Z"/></svg></button>
        <button class="sb" aria-label="Selection cycling"><svg width="20" height="20"><path class="sw" d="M2.500 0V7M0 3.500H6M6 5.500H18"/><path fill="#6bcb8d" d="M7 8H20V20H7Z"/></svg></button>
        <button class="sb" aria-label="3D object snap"><svg width="20" height="20"><path class="sw" d="M4 14V5L8 1H19V13L15 18H8M4 5H15V17M15 5L19 1"/><path class="so" d="M1.500 14.500H6.500V19.500H1.500Z"/></svg></button>
        <svg class="sb-caret" width="8" height="5"><use href="#caret"/></svg>
      </div>
      <div class="sb-group">
        <button class="sb on" aria-label="Dynamic UCS"><svg width="20" height="20"><path class="sww" d="M3.500 4V16.500H16"/><path class="fww" d="M0 5H7L3 0ZM15 13V20L20 16ZM12 4L8 10H11L10 15L15 8H12Z"/></svg></button>
        <button class="sb" aria-label="Selection filtering"><svg width="20" height="20"><path class="sw" d="M3 4H15V17H3ZM15 4L19 2V14L15 17"/><path class="fb" d="M1 2H5V6H1ZM13 2H17V6H13ZM1 15H5V19H1ZM13 15H17V19H13Z"/></svg></button>
        <svg class="sb-caret" width="8" height="5"><use href="#caret"/></svg>
        <button class="sb on" aria-label="Gizmo"><svg width="20" height="20"><path class="sww" d="M10 4V11L3 16M10 11L17 16M8 1H12V5H8ZM1 14H5V18H1ZM15 14H19V18H15ZM3 14V7L8 3M17 14V7L12 3M5 17L10 19L15 17"/></svg></button>
        <svg class="sb-caret" width="8" height="5"><use href="#caret"/></svg>
      </div>
      <div class="sb-group">
        <button class="sb on" aria-label="Annotation visibility"><svg width="20" height="20"><path class="fww" d="M8 0L10 8L15 20L8 15L1 20L6 8Z"/><circle class="sww" cx="16" cy="4" r="3"/></svg></button>
        <button class="sb" aria-label="Auto scale"><svg width="20" height="20"><path class="fw" d="M8 0L10 8L15 20L8 15L1 20L6 8ZM16 0L12 5H15L14 9L19 3H16Z"/></svg></button>
        <button class="sb" aria-label="Annotation scale"><svg width="20" height="20"><path class="fw" d="M10 0L12 8L18 20L10 15L2 20L8 8Z"/></svg></button>
        <button class="sb-text scale">1:1 / 100%<svg width="8" height="5"><use href="#caret"/></svg></button>
      </div>
      <div class="sb-group">
        <button class="sb" aria-label="Workspace switching"><svg width="20" height="20"><circle fill="none" stroke="#dcdcdc" stroke-width="4" cx="10" cy="10" r="5"/><path class="sw gear" d="M10 0V4M10 16V20M0 10H4M16 10H20M3 3L6 6M14 14L17 17M17 3L14 6M6 14L3 17"/></svg></button>
        <svg class="sb-caret" width="8" height="5"><use href="#caret"/></svg>
        <button class="sb" aria-label="Annotation monitor"><svg width="20" height="20"><path class="sw thick" d="M10 0V20M0 10H20"/></svg></button>
      </div>
      <div class="sb-group">
        <button class="sb-text units"><svg width="12" height="20"><path class="fw" d="M1 1H11V19H1V16H5V15H1V12H5V11H1V8H5V7H1V4H5V3H1Z"/></svg>Decimal<svg width="8" height="5"><use href="#caret"/></svg></button>
        <button class="sb" aria-label="Quick properties"><svg width="20" height="20"><path class="sw" d="M2.500 .5H17.500V19.500H2.500Z"/><path class="fw" d="M2 0H18V4H2ZM5 7H7V9H5ZM9 7H15V8H9ZM5 11H7V13H5ZM9 11H15V12H9ZM5 15H7V17H5ZM9 15H15V16H9Z"/></svg></button>
      </div>
      <div class="sb-group">
        <button class="sb" aria-label="Lock UI"><svg width="20" height="20"><path class="sw" d="M9 15.500H1.500V1.500H17.500V7"/><path class="fw" d="M1 1H18V4H1ZM9 13H19V20H9Z"/><path class="sw" d="M15 13V8H19V12"/></svg></button>
        <svg class="sb-caret" width="8" height="5"><use href="#caret"/></svg>
        <button class="sb" aria-label="Isolate objects"><svg width="20" height="20"><path class="sw" d="M1.500 .5H8.500V7.500H1.500ZM8 12L12 19H4Z"/><circle class="sw" cx="16" cy="9" r="4"/></svg></button>
      </div>
      <div class="sb-group">
        <button class="sb on" aria-label="Hardware acceleration"><svg width="20" height="20"><circle class="sww" cx="10" cy="10" r="9"/><circle fill="#8fb9e6" cx="10" cy="10" r="7"/><path class="sww thick" d="M9 14L15 7"/></svg></button>
      </div>
      <div class="sb-group">
        <button class="sb trusted" aria-label="Trusted file"><svg width="24" height="24"><path fill="#1d66b8" d="M3 0H15L22 7V18H3Z"/><path class="sww" d="M6 0V10M0 5H12M3 2L9 8"/><path fill="#f0d018" d="M1 13L8 11L9 20H0Z"/><path stroke="#4cb06a" stroke-width="2" fill="none" d="M10 17L14 21L22 13"/></svg></button>
      </div>
      <div class="sb-group last">
        <button class="sb" aria-label="Clean screen"><svg width="20" height="20"><path class="sw" d="M.5 2.500H19.500V17.500H.5Z"/><path class="fw" d="M13 4H17V8L15 7L13 9L12 8L14 6ZM7 16H3V12L5 13L7 11L8 12L6 14Z"/></svg></button>
        <button class="sb" aria-label="Customization"><svg width="20" height="20"><path class="fw" d="M0 1H20V3H0ZM0 9H20V11H0ZM0 17H20V19H0Z"/></svg></button>
      </div>
    </div>
  </div>
</div>

<footer class="explorer">
  <div class="tree">
    <svg width="12" height="8" viewBox="0 0 12 8"><path class="sww thick" d="M1 1L6 6L11 1"/></svg>
    <svg width="18" height="16" viewBox="0 0 18 16"><path fill="#3791d4" stroke="#205c90" d="M.5 .5H17.500V12H.5Z"/><path fill="#7ec3ef" d="M2 2H9L3 8H2Z"/><path class="fg" d="M6 14H12V16H6Z"/></svg>
    <a href="#">This PC</a>
  </div>
  <div class="explorer-status">
    <span class="seg">27 items</span><span class="seg">1 item selected&nbsp; 77.8 KB</span>
    <div class="view-modes">
      <button aria-label="Details"><svg width="20" height="20"><rect class="fg" width="20" height="20" rx="2"/><path class="skt" d="M3 4.500H17M3 8.500H17M3 12.500H17M3 16.500H17"/></svg></button>
      <button class="sel" aria-label="Large icons"><svg width="20" height="20"><rect class="fg" width="20" height="20" rx="2"/><path fill="#fff" stroke="#111" d="M3.500 3.500H16.500V14.500H3.500Z"/><path class="skt" d="M3 17.500H17"/></svg></button>
    </div>
  </div>
</footer>

<div class="watermark" aria-hidden="true"><span class="wm-name" lang="ar">مستقل</span><span class="wm-url">mostaql.com</span></div>
</body>
</html>
```
FILE: styles.css
```css
:root {
  --bg: #222932;
  --panel: #3b4453;
  --field: #4d586b;
  --light: #dcdcdc;
  --blue: #74bdf8;
  --orange: #f7c77c;
  --ui: "Open Sans", "DejaVu Sans", sans-serif;
}

* { box-sizing: border-box; }

body {
  margin: 0;
  min-height: 100vh;
  display: flex;
  flex-direction: column;
  background: #191919;
  color: #f0f0f0;
  font: 14px/20px var(--ui);
}

a { color: inherit; text-decoration: none; }
h1, h2, p { margin: 0; font-size: 14px; font-weight: 400; }
svg { display: block; flex: none; overflow: visible; fill: none; }
button {
  display: flex;
  align-items: center;
  justify-content: center;
  padding: 0;
  border: 0;
  background: none;
  color: inherit;
  font: inherit;
  white-space: nowrap;
}
.sprite { position: absolute; width: 0; height: 0; }

/* icon paints */
.fw { fill: var(--light); }
.fww { fill: #fafafa; }
.fg { fill: #b9b9b9; }
.fk { fill: #222932; }
.fs { fill: #4a505a; }
.fb { fill: var(--blue); }
.fo { fill: var(--orange); }
.fm { fill: #5c636e; }
.sw { stroke: #cfcfcf; }
.sww { stroke: #fff; }
.sb-line, path.sb, circle.sb { stroke: var(--blue); }
.so { stroke: var(--orange); }
.sgr { stroke: #6bcb8d; }
.skt { stroke: #222932; }
.thick { stroke-width: 2; }
.gear { stroke-width: 3; }
.dash { stroke-dasharray: 3 2; }

/* window header */
.app { flex: 1; display: flex; flex-direction: column; padding: 2px 2px 0; background: var(--bg); box-shadow: inset 0 2px #1d1e1e; }
.header { display: flex; height: 60px; padding-left: 4px; border-bottom: 1px solid var(--panel); }
.app-button { width: 52px; height: 52px; margin-top: 3px; border: 1px solid #0c0c0c; }
.header-rows { flex: 1; min-width: 0; display: flex; flex-direction: column; }
.titlebar { position: relative; height: 36px; display: flex; align-items: center; justify-content: space-between; padding-right: 11px; }
.quick { display: flex; align-items: center; gap: 10px; padding-left: 9px; }
.title {
  position: absolute;
  left: 594px;
  display: flex;
  gap: 22px;
}
.account { display: flex; align-items: center; margin-left: auto; }
.search-arrow { margin-right: 8px; }
.search {
  width: 223px;
  height: 26px;
  padding: 0 3px;
  border: 0;
  background: #454f60;
  font: italic 14px/20px var(--ui);
  color: #fff;
}
.search::placeholder { color: #b9bdc4; opacity: 1; }
.account button { margin-left: 6px; }
.account .signin { gap: 8px; margin: 0 60px 0 9px; }
.account .cart { margin-left: 14px; }
.account .hub { margin: 0 8px 0 10px; }
.rule { width: 1px; height: 26px; margin: 0 12px; background: #4a5464; }
.account .help { width: 20px; height: 20px; margin: 0 10px 0 0; border-radius: 10px; background: #f2f2f2; color: #24507f; font-weight: 700; }
.window-buttons { display: flex; gap: 15px; margin-left: 88px; align-items: center; }
.menurow { display: flex; justify-content: space-between; height: 23px; align-items: center; padding-right: 6px; }
.menubar { display: flex; gap: 27px; padding-left: 13px; color: #b4b7bb; }
.doc-buttons { display: flex; gap: 7px; }

/* ribbon */
.frame { flex: 1; display: flex; flex-direction: column; margin: 0 1px; padding-bottom: 3px; border: solid var(--panel); border-width: 0 4px 4px 3px; }
.ribbon-tabs { display: flex; align-items: stretch; gap: 1px; height: 25px; padding: 3px 0 0 4px; color: #b0b3b8; line-height: 22px; }
.ribbon-tabs a { padding: 0 12px; }
.ribbon-tabs .active { background: var(--panel); color: #fff; }
.collapse { margin: 0 9px 4px 26px; }
.ribbon-tabs .caret { align-self: center; margin-bottom: 4px; }
.ribbon { display: flex; gap: 1px; margin-left: 2px; height: 122px; }
.panel { display: flex; flex-direction: column; background: var(--panel); min-width: 0; }
.panel h2 { height: 22px; padding-top: 1px; display: flex; align-items: center; justify-content: center; gap: 8px; position: relative; }
.launch { position: absolute; right: 4px; }
.tools { display: flex; height: 100px; padding-top: 5px; }
.p-draw { flex: 276 1 276px; }
.p-modify { flex: 315 1 315px; }
.p-annotation { flex: 211 1 211px; }
.p-layers { flex: 340 1 340px; }
.p-block { flex: 99 1 99px; }
.p-properties { flex: 276 1 276px; }
.p-groups { flex: 84 1 84px; }
.p-utilities { flex: 120 1 120px; }
.p-clipboard { flex: 98 1 98px; }
.p-view { flex: 78 1 78px; }
.panel.p-properties h2, .panel.p-view h2 { padding-right: 14px; }
.big { flex-direction: column; justify-content: flex-start; width: 52px; line-height: 20px; }
.big > svg:first-child { margin-bottom: 5px; }
.big > .caret { margin-top: 2px; }
.big.line { width: 50px; }
.big.polyline { width: 56px; }
.big.circle { width: 68px; }
.big.arc { width: 46px; }
.big.text { width: 54px; }
.big.dimension { width: 78px; }
.big.wider { width: 76px; }
.col { display: flex; flex-direction: column; padding-top: 1px; }
.small { height: 30px; justify-content: flex-start; gap: 7px; }
.small .caret { margin-left: 3px; }
.p-draw .col { margin-left: 8px; }
.p-modify .tools { padding-left: 7px; }
.c1 { width: 91px; }
.c2 { width: 88px; }
.c3 { width: 95px; }
.p-annotation .tools { padding-left: 3px; }
.p-annotation .col { margin-left: 4px; }
.p-layers .tools { padding-left: 1px; }
.layer-area { flex: 1; padding-right: 3px; }
.icon-grid { display: grid; grid-template-columns: repeat(5, 20px); grid-auto-rows: 20px; gap: 11px 10px; padding: 7px 0 0 4px; }
.combo { position: relative; }
.combo select {
  appearance: none;
  display: block;
  width: 100%;
  height: 28px;
  padding: 0 20px 0 102px;
  border: 1px solid #222932;
  border-radius: 0;
  background: var(--field);
  color: #f4f4f4;
  font: inherit;
}
.combo-art { position: absolute; left: 4px; top: 4px; pointer-events: none; }
.combo-arrow { position: absolute; right: 2px; top: 11px; pointer-events: none; }
.combos { flex: 1; display: flex; flex-direction: column; gap: 2px; padding: 1px 3px 0 4px; }
.combo .c-color { padding-left: 46px; }
.combo .c-line { padding-left: 85px; }
.p-block .col { margin-left: 3px; }
.p-properties .wider { width: 78px; }
.p-groups .col { margin-left: 1px; }
.p-groups .small { width: 28px; justify-content: center; }
.p-groups .small.on { height: 28px; background: #4a6a94; outline: 1px solid var(--blue); }
.p-utilities .big { width: 88px; }
.p-utilities .col { margin-left: 4px; }
.p-clipboard .big { width: 68px; }
.p-clipboard .col { margin-left: 2px; }

/* drawing tabs */
.file-tabs { display: flex; height: 38px; padding: 6px 0 0 22px; border-bottom: 5px solid var(--panel); align-items: stretch; color: #b9bcc0; }
.file-tab { position: relative; display: flex; align-items: center; }
.file-tab > svg { position: absolute; inset: 0; width: 100%; height: 100%; }
.file-tab > :not(svg:first-child) { position: relative; }
.start { width: 158px; padding-left: 18px; }
.current.file-tab { width: 166px; margin-left: -1px; padding-left: 16px; gap: 31px; color: #f4f4f4; }
.add-file { width: 26px; height: 20px; margin-top: 5px; border-radius: 3px 12px 3px 12px; background: #2c3442; }

/* drawing area */
.canvas { position: relative; flex: 1; overflow: hidden; min-height: 300px; }
.drawing { position: absolute; width: 100%; height: 100%; overflow: hidden; }
.world { transform: translate(-6px, -247px) translate(.5px, .5px); }
.world path { shape-rendering: crispEdges; }
.grid-minor { stroke: #272e39; }
.grid-major { stroke: #2e3647; }
.walls { stroke: #ececec; }
.centres { stroke: #ececec; stroke-dasharray: 18 4 3 4; }
.red { stroke: #941a1e; }
.dims path { marker-start: url(#arrow); marker-end: url(#arrow); }
.labels { stroke: none; fill: #a01c20; font: 16px "Liberation Sans", Arial, sans-serif; text-anchor: middle; }
.doors { stroke: #e6c619; }
.world .doors path:not(.leaf) { shape-rendering: auto; }
.crosshair { stroke: #e6dc20; }
.ucs { stroke: #e8e8e8; }
.ucs text { stroke: none; fill: #e8e8e8; font: 300 21px var(--ui); text-anchor: middle; }
.view-label { position: absolute; left: 4px; top: 6px; color: #e4e4e4; }
.viewcube { position: absolute; top: 14px; right: 13px; display: flex; flex-direction: column; align-items: center; gap: 19px; }
.compass { fill: #b4b7b8; font: bold 22px "Liberation Sans", Arial, sans-serif; text-anchor: middle; }
.cube-face { fill: #4b5565; font: bold 12px var(--ui); text-anchor: middle; }
.wcs { width: 57px; height: 20px; gap: 7px; border: 1px solid #7f838a; border-radius: 4px; background: #a0a4aa; color: #565b63; font: 13px "Liberation Sans", Arial, sans-serif; }

/* layout tabs */
.layout-tabs { display: flex; height: 27px; padding: 0 0 4px 12px; gap: 2px; border-top: 1px solid #454c57; color: #a9adb3; }
.layout-tab { width: 77px; padding-top: 1px; text-align: center; background: #2c3442; clip-path: polygon(0 0, 100% 0, 93% 85%, 88% 100%, 12% 100%, 7% 85%); }
.layout-tab.current { background: var(--panel); color: #fff; font-weight: 700; }
.add-layout { width: 28px; height: 20px; margin: 1px 0 0 6px; background: #2c3442; border-radius: 12px 3px 12px 3px; }

/* status bar */
.statusbar { display: flex; justify-content: flex-end; gap: 3px; height: 30px; padding-right: 2px; }
.sb-group { display: flex; align-items: center; background: var(--panel); }
.coords { width: 225px; justify-content: flex-end; padding-right: 7px; }
button.sb { width: 29px; height: 28px; margin-right: 1px; }
.sb.on { background: #5f90c5; }
.sb-caret { margin: 0 9px 0 3px; }
.sb-text { padding: 0 4px; }
.model { padding: 0 5px; }
button.trusted { width: 33px; }
.scale { gap: 5px; padding: 0 6px 0 4px; }
.units { padding: 0 6px 0 9px; gap: 16px; }

/* file explorer behind the window */
.explorer { background: #191919; }
.tree { display: flex; align-items: center; width: 276px; height: 29px; padding: 0 0 9px 15px; border-right: 1px solid #2b2b2b; }
.tree svg + svg { margin: 0 6px 0 17px; }
.explorer-status { display: flex; align-items: stretch; height: 30px; padding-left: 4px; background: #1d1d1d; color: #dedede; }
.seg { display: flex; align-items: center; padding: 2px 13px 0; position: relative; }
.seg::after { content: ""; position: absolute; right: 0; top: 8px; width: 1px; height: 15px; background: #fff; }
.view-modes { display: flex; margin-left: auto; padding-right: 3px; }
.view-modes button { width: 32px; }
.view-modes .sel { background: #4b484c; }

/* watermark */
.watermark {
  position: absolute;
  inset: auto 0 22px;
  display: flex;
  flex-direction: column;
  align-items: center;
  pointer-events: none;
  color: #a0a3a6;
  opacity: .55;
}
.wm-name { font: bold 66px/68px "DejaVu Sans", sans-serif; }
.wm-url { font: bold 37px/40px "Liberation Sans", Arial, sans-serif; }
```
